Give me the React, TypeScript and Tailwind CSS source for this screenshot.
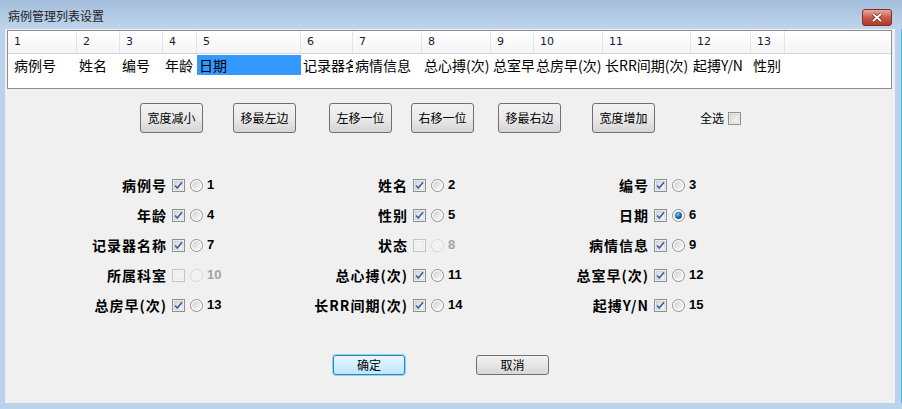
import React from "react";

const cols = [
  { n: "1", w: 69, t: "病例号", pl: 6 },
  { n: "2", w: 43, t: "姓名", pl: 2 },
  { n: "3", w: 43, t: "编号", pl: 2 },
  { n: "4", w: 34, t: "年龄", pl: 2 },
  { n: "5", w: 104, t: "日期", pl: 2, sel: true },
  { n: "6", w: 52, t: "记录器名称", pl: 2 },
  { n: "7", w: 69, t: "病情信息", pl: 2 },
  { n: "8", w: 69, t: "总心搏(次)", pl: 2 },
  { n: "9", w: 43, t: "总室早", pl: 2 },
  { n: "10", w: 69, t: "总房早(次)", pl: 2 },
  { n: "11", w: 88, t: "长RR间期(次)", pl: 2 },
  { n: "12", w: 60, t: "起搏Y/N", pl: 2 },
  { n: "13", w: 34, t: "性别", pl: 2 },
];

const items = [
  { t: "病例号", n: 1, on: true },
  { t: "姓名", n: 2, on: true },
  { t: "编号", n: 3, on: true },
  { t: "年龄", n: 4, on: true },
  { t: "性别", n: 5, on: true },
  { t: "日期", n: 6, on: true, picked: true },
  { t: "记录器名称", n: 7, on: true },
  { t: "状态", n: 8, on: false },
  { t: "病情信息", n: 9, on: true },
  { t: "所属科室", n: 10, on: false },
  { t: "总心搏(次)", n: 11, on: true },
  { t: "总室早(次)", n: 12, on: true },
  { t: "总房早(次)", n: 13, on: true },
  { t: "长RR间期(次)", n: 14, on: true },
  { t: "起搏Y/N", n: 15, on: true },
];

const CheckBox = ({ on, off }: { on?: boolean; off?: boolean }) => (
  <svg width="13" height="13" viewBox="0 0 13 13" className="shrink-0">
    <defs>
      <linearGradient id="cbg" x1="0" y1="0" x2="1" y2="1">
        <stop offset="0" stopColor="#d6d6d6" />
        <stop offset="1" stopColor="#fafafa" />
      </linearGradient>
    </defs>
    <rect x="0.5" y="0.5" width="12" height="12" fill="#fff" stroke={off ? "#c4c4c4" : "#8e8f8f"} />
    <rect x="2" y="2" width="9" height="9" fill={off ? "#f2f2f2" : "url(#cbg)"} stroke={off ? "#dedede" : "#b8b8b8"} strokeWidth="0.6" />
    {on && <path d="M3 6.5 L5.3 9 L10 3.2" fill="none" stroke="#3f5cab" strokeWidth="1.6" />}
  </svg>
);

const Radio = ({ picked, off }: { picked?: boolean; off?: boolean }) => (
  <svg width="13" height="13" viewBox="0 0 13 13" className="shrink-0">
    <defs>
      <linearGradient id="rbg" x1="0" y1="0" x2="1" y2="1">
        <stop offset="0" stopColor="#cfcfcf" />
        <stop offset="1" stopColor="#fbfbfb" />
      </linearGradient>
      <radialGradient id="rdot" cx="0.4" cy="0.35" r="0.7">
        <stop offset="0" stopColor="#8fd4ff" />
        <stop offset="0.5" stopColor="#1a78c8" />
        <stop offset="1" stopColor="#0b3f7a" />
      </radialGradient>
    </defs>
    <circle cx="6.5" cy="6.5" r="6" fill={off ? "#f6f6f6" : "#fff"} stroke={off ? "#d4d4d4" : "#8e8f8f"} />
    <circle cx="6.5" cy="6.5" r="4.3" fill={off ? "#f2f2f2" : "url(#rbg)"} />
    {picked && <circle cx="6.5" cy="6.5" r="3.4" fill="url(#rdot)" />}
  </svg>
);

const Btn = ({ label, className }: { label: string; className?: string }) => (
  <div
    className={`h-[30px] w-[63px] flex items-center justify-center rounded-[3px] border border-[#707070] bg-gradient-to-b from-[#f2f2f2] via-[#ebebeb] to-[#d4d4d4] text-[12px] text-black ${className ?? ""}`}
  >
    {label}
  </div>
);

export default function App() {
  return (
    <div className="w-[902px] h-[409px] flex flex-col bg-[#bad2ec] font-['Noto_Sans_CJK_SC',sans-serif] overflow-hidden">
      {/* title bar */}
      <div className="h-[29px] shrink-0 flex items-start justify-between bg-gradient-to-b from-[#a3bddb] to-[#c0d5ec]">
        <span className="ml-[8px] mt-[7px] text-[12px] leading-[18px] text-[#1e1e1e]">病例管理列表设置</span>
        <div className="mt-[9px] mr-[10px] w-[30px] h-[17px] rounded-[3px] border border-[#7a2f2f] bg-gradient-to-b from-[#e9a99b] via-[#c95a4a] to-[#b3382a] flex items-center justify-center">
          <svg width="12" height="9" viewBox="0 0 12 9">
            <path d="M2 1 L10 8 M10 1 L2 8" stroke="#5a1a14" strokeWidth="3.2" />
            <path d="M2 1 L10 8 M10 1 L2 8" stroke="#fff" strokeWidth="2" />
          </svg>
        </div>
      </div>

      <div className="flex flex-1 min-h-0">
        <div className="w-[5px] shrink-0" />
        {/* client area */}
        <div className="w-[890px] h-[374px] bg-[#f0f0f0] flex flex-col">
          {/* list view */}
          <div className="mt-[1px] ml-[2px] w-[885px] h-[59px] border border-[#8f8f8f] bg-white flex flex-col">
            <div className="h-[23px] flex border-b border-[#d5d5d5] bg-gradient-to-b from-white to-[#f4f5f7]">
              {cols.map((c) => (
                <div
                  key={c.n}
                  style={{ width: c.w }}
                  className="shrink-0 border-r border-[#e3e5e8] pl-[6px] pt-[4px] text-[11px] leading-[14px] text-[#1a1a3a] font-['DejaVu_Sans',sans-serif]"
                >
                  {c.n}
                </div>
              ))}
              <div className="flex-1" />
            </div>
            <div className="mt-[1px] h-[20px] flex">
              {cols.map((c) => (
                <div
                  key={c.n}
                  style={{ width: c.w, paddingLeft: c.pl }}
                  className={`shrink-0 overflow-hidden whitespace-nowrap text-[14px] leading-[20px] text-black ${c.sel ? "bg-[#3399ff]" : ""}`}
                >
                  {c.t}
                </div>
              ))}
            </div>
          </div>

          {/* buttons */}
          <div className="mt-[14px] h-[30px] flex items-start">
            <Btn label="宽度减小" className="ml-[135px]" />
            <Btn label="移最左边" className="ml-[30px]" />
            <Btn label="左移一位" className="ml-[33px]" />
            <Btn label="右移一位" className="ml-[19px]" />
            <Btn label="移最右边" className="ml-[24px]" />
            <Btn label="宽度增加" className="ml-[31px]" />
            <div className="ml-[45px] mt-[6px] flex items-center gap-[4px]">
              <span className="text-[12px] leading-[18px] text-black">全选</span>
              <CheckBox />
            </div>
          </div>

          {/* column options */}
          <div className="mt-[37px] ml-[2px] grid grid-cols-[241px_241px_241px]">
            {items.map((it) => (
              <div key={it.n} className="h-[30px] flex items-center">
                <span className="w-[160px] text-right text-[14px] font-bold tracking-[1px] leading-[20px] text-black whitespace-nowrap">
                  {it.t}
                </span>
                <span className="ml-[5px] flex">
                  <CheckBox on={it.on} off={!it.on} />
                </span>
                <span className="ml-[5px] flex">
                  <Radio picked={it.picked} off={!it.on} />
                </span>
                <span
                  className={`ml-[4px] text-[13px] font-bold font-['Liberation_Sans',sans-serif] ${it.on ? "text-black" : "text-[#a3a3a3]"}`}
                >
                  {it.n}
                </span>
              </div>
            ))}
          </div>

          {/* ok / cancel */}
          <div className="mt-[35px] flex">
            <div className="ml-[328px] w-[72px] h-[20px] rounded-[3px] border border-[#3c7fb1] shadow-[0_0_0_1px_#7fd8f8] bg-gradient-to-b from-[#eaf6fd] to-[#bee6fd] flex items-center justify-center text-[12px] leading-[18px] text-black">
              确定
            </div>
            <div className="ml-[71px] w-[73px] h-[20px] rounded-[3px] border border-[#707070] bg-gradient-to-b from-[#f2f2f2] to-[#d8d8d8] flex items-center justify-center text-[12px] leading-[18px] text-black">
              取消
            </div>
          </div>
        </div>
        <div className="w-[6px] shrink-0" />
        <div className="w-[1px] shrink-0 bg-[#3ec6f0]" />
      </div>
      <div className="h-[6px] shrink-0" />
    </div>
  );
}
